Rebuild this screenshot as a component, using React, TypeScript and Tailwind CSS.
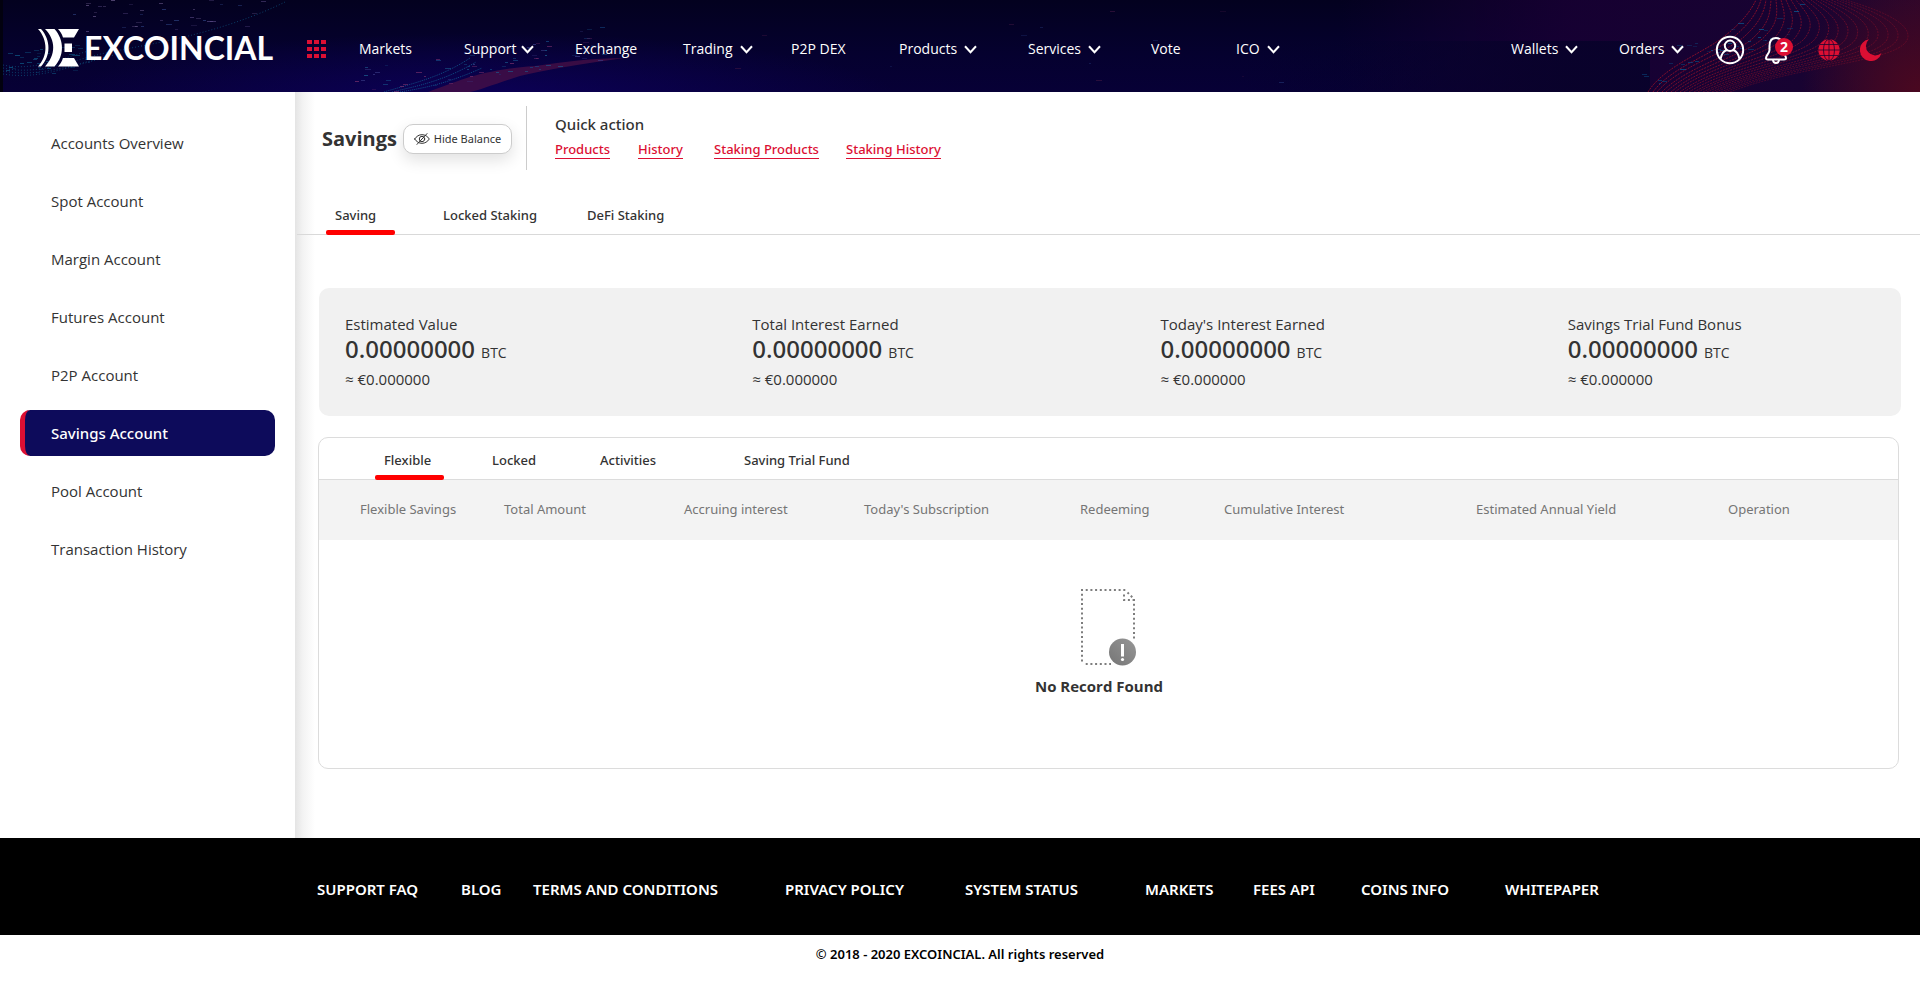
import React, { useState } from "react";

type NavItem = { label: string; menu?: boolean; width: string; gap?: string };

const navItems: NavItem[] = [
  { label: "Markets", width: "w-[105px]" },
  { label: "Support", menu: true, width: "w-[111px]", gap: "gap-1" },
  { label: "Exchange", width: "w-[108px]" },
  { label: "Trading", menu: true, width: "w-[108px]" },
  { label: "P2P DEX", width: "w-[108px]" },
  { label: "Products", menu: true, width: "w-[129px]" },
  { label: "Services", menu: true, width: "w-[123px]" },
  { label: "Vote", width: "w-[85px]" },
  { label: "ICO", menu: true, width: "w-[60px]" },
];

const sideItems = [
  "Accounts Overview",
  "Spot Account",
  "Margin Account",
  "Futures Account",
  "P2P Account",
  "Savings Account",
  "Pool Account",
  "Transaction History",
];

const quickLinks = [
  { label: "Products", width: "w-[83px]" },
  { label: "History", width: "w-[76px]" },
  { label: "Staking Products", width: "w-[132px]" },
  { label: "Staking History", width: "w-[110px]" },
];

const stats = [
  "Estimated Value",
  "Total Interest Earned",
  "Today's Interest Earned",
  "Savings Trial Fund Bonus",
];

const columns = [
  { label: "Flexible Savings", cell: "w-[185px] pl-[41px]" },
  { label: "Total Amount", cell: "w-[180px]" },
  { label: "Accruing interest", cell: "w-[180px]" },
  { label: "Today's Subscription", cell: "w-[216px]" },
  { label: "Redeeming", cell: "w-[144px]" },
  { label: "Cumulative Interest", cell: "w-[252px]" },
  { label: "Estimated Annual Yield", cell: "w-[252px]" },
  { label: "Operation", cell: "w-[171px]" },
];

const footerLinks = [
  "SUPPORT FAQ",
  "BLOG",
  "TERMS AND CONDITIONS",
  "PRIVACY POLICY",
  "SYSTEM STATUS",
  "MARKETS",
  "FEES API",
  "COINS INFO",
  "WHITEPAPER",
];

/* Deterministic pseudo random numbers for the particle field */
function noise(seed: number) {
  const v = Math.sin(seed * 127.1 + 11.7) * 43758.5453;
  return v - Math.floor(v);
}

type Dot = { x: number; y: number; w: number; c: string; o: number };

function scatter(
  count: number,
  seed: number,
  x0: number,
  x1: number,
  y: (t: number) => number,
  spread: number,
  colors: string[],
): Dot[] {
  return Array.from({ length: count }, (_, i) => {
    const t = noise(seed + i * 3);
    return {
      x: Math.round(x0 + t * (x1 - x0)),
      y: Math.round(y(t) + (noise(seed + i * 3 + 1) - 0.5) * spread),
      w: 2 + Math.round(noise(seed + i * 3 + 2) * 4),
      c: colors[i % colors.length],
      o: 0.25 + noise(seed + i * 5 + 4) * 0.5,
    };
  });
}

const dots: Dot[] = [
  ...scatter(45, 3, 70, 270, (t) => 14 - t * 6, 36, ["#5a4a86", "#2c3f7d", "#6b5a8c"]),
  ...scatter(40, 211, 4, 90, (t) => 66 - t * 10, 26, ["#0e5f8c", "#10507c"]),
  ...scatter(90, 500, 350, 620, (t) => 86 - t * 46, 34, ["#1c5f92", "#7a2f6c", "#3d3f8a", "#164a86"]),
  ...scatter(40, 900, 1640, 1800, (t) => 76 - t * 62, 34, ["#0a5f96", "#084f86"]),
  ...scatter(14, 1200, 600, 1500, () => 44, 88, ["#1f2f6c", "#3b1540"]),
];

/* One line of the wave on the right: t runs from the inner to the outer line */
function wave(t: number) {
  const mix = (a: number, b: number) => Math.round(a + (b - a) * t);
  return (
    `M${mix(1648, 1730)} 92` +
    `C${mix(1664, 1800)} ${mix(66, 64)} ${mix(1706, 1908)} ${mix(52, 62)} ${mix(1726, 1908)} ${mix(35, 36)}` +
    `C${mix(1742, 1908)} ${mix(22, 20)} ${mix(1750, 1872)} ${mix(12, 8)} ${mix(1756, 1846)} 0`
  );
}

function HeaderArt() {
  return (
    <svg
      aria-hidden="true"
      className="absolute inset-0 h-full w-full"
      viewBox="0 0 1920 92"
      preserveAspectRatio="xMidYMid slice"
    >
      <defs>
        <linearGradient id="base" x1="0" x2="0" y1="0" y2="1">
          <stop offset="0" stopColor="#03011f" />
          <stop offset="0.6" stopColor="#05012f" />
          <stop offset="1" stopColor="#070036" />
        </linearGradient>
        <radialGradient id="blue" cx="480" cy="100" r="420" gradientUnits="userSpaceOnUse" gradientTransform="matrix(1 0 0 .16 0 84)">
          <stop offset="0" stopColor="#0d0060" stopOpacity="0.8" />
          <stop offset="1" stopColor="#0d0060" stopOpacity="0" />
        </radialGradient>
        <linearGradient id="violet" x1="1340" x2="1920" y1="0" y2="0" gradientUnits="userSpaceOnUse">
          <stop offset="0" stopColor="#190036" stopOpacity="0" />
          <stop offset="0.4" stopColor="#190034" stopOpacity="0.85" />
          <stop offset="0.8" stopColor="#180332" />
          <stop offset="1" stopColor="#2a062c" />
        </linearGradient>
        <radialGradient id="wine" cx="1920" cy="92" r="120" gradientUnits="userSpaceOnUse">
          <stop offset="0" stopColor="#4a0820" />
          <stop offset="1" stopColor="#4a0820" stopOpacity="0" />
        </radialGradient>
        <linearGradient id="night" x1="1240" x2="1560" y1="0" y2="0" gradientUnits="userSpaceOnUse">
          <stop offset="0" stopColor="#04022a" stopOpacity="0" />
          <stop offset="1" stopColor="#060229" stopOpacity="0.8" />
        </linearGradient>
      </defs>
      <rect width="1920" height="92" fill="url(#base)" />
      <rect width="1920" height="92" fill="url(#blue)" />
      <rect x="1340" width="580" height="92" fill="url(#violet)" />
      <rect x="1240" y="41" width="410" height="51" fill="url(#night)" />
      <rect x="1780" width="140" height="92" fill="url(#wine)" />
      <path d="M428 92C462 80 480 70 535 66C565 62 590 58 625 58C580 64 545 70 520 76C495 84 480 90 470 92Z" fill="#4a1046" opacity="0.75" />
      <g fill="none" stroke="#12699c" strokeWidth="1" strokeDasharray="1 1" opacity="0.75">
        <path d="M384 92C410 84 440 78 470 58" />
        <path d="M392 92C416 86 442 82 476 62" />
        <path d="M400 92C424 88 446 84 482 68" />
      </g>
      <g fill="none" stroke="#0d4d78" strokeWidth="1" strokeDasharray="1 2" opacity="0.8">
        <path d="M3 68C40 76 70 60 110 52S220 34 285 2" />
        <path d="M3 71C40 78 74 64 114 55" />
        <path d="M3 74C40 80 70 66 104 58" />
        <path d="M3 65C36 72 66 56 100 48" />
      </g>
      <g fill="none" stroke="#a01228" strokeWidth="1" strokeDasharray="2 1">
        {Array.from({ length: 19 }, (_, i) => (
          <path key={i} d={wave(i / 18)} opacity={0.8 - i * 0.025} />
        ))}
      </g>
      {dots.map((d, i) => (
        <rect key={i} x={d.x} y={d.y} width={d.w} height="1" fill={d.c} opacity={d.o} />
      ))}
      <rect width="3" height="92" fill="#02010f" />
    </svg>
  );
}

function Emblem() {
  return (
    <svg aria-hidden="true" viewBox="0 0 42 38" className="h-[38px] w-[42px] fill-white">
      <path d="M0 0H3C13 11 13 27 3 37.5H0C10 27 10 11 0 0Z" />
      <path d="M7 0H16.500C26.500 11 26.500 27 16.500 37.500H7C18 26 18 11 7 0Z" />
      <path d="M20 0H41L36 8.500H25C24 5 22 2 20 0Z" />
      <path d="M26.500 14.500H34V23H26.500Z" />
      <path d="M25 29H36L41 37.500H20C22 35.500 24 32.500 25 29Z" />
    </svg>
  );
}

function Chevron() {
  return (
    <svg aria-hidden="true" viewBox="0 0 13 9" className="h-[9px] w-[13px] fill-none stroke-white stroke-2">
      <path d="M1 1.200L6.500 7.200L12 1.200" />
    </svg>
  );
}

function GridIcon() {
  return (
    <svg aria-hidden="true" viewBox="0 0 19 18" className="h-[18px] w-[19px] fill-[#dc0f33]">
      {[0, 7, 14].map((x) =>
        [0, 7, 14].map((y) => <rect key={`${x}-${y}`} x={x} y={y} width="5" height="4" />),
      )}
    </svg>
  );
}

function UserIcon() {
  return (
    <svg aria-hidden="true" viewBox="0 0 30 30" className="size-[30px] fill-none stroke-white stroke-2">
      <circle cx="15" cy="15" r="13.200" />
      <circle cx="15" cy="10.800" r="5.200" />
      <path d="M5.500 24.200C6.300 19 9.500 15.800 12 15M24.500 24.200C23.700 19 20.500 15.800 18 15" />
    </svg>
  );
}

function BellIcon() {
  return (
    <svg aria-hidden="true" viewBox="0 0 22 28" className="h-7 w-[22px] fill-none stroke-white stroke-2" strokeLinejoin="round">
      <path d="M11 2C6.500 2 4.500 5.500 4.500 10V14C4.500 17.500 1 19 1 22C1 23 1.700 23.500 3 23.500H19C20.300 23.500 21 23 21 22C21 19 17.500 17.500 17.500 14V10C17.500 5.500 15.500 2 11 2Z" />
      <path d="M8 24C8.200 26 9.300 27 11 27S13.800 26 14 24" />
    </svg>
  );
}

function GlobeIcon() {
  return (
    <svg aria-hidden="true" viewBox="0 0 22 22" className="size-[22px]">
      <circle cx="11" cy="11" r="10.700" fill="#dc0f33" />
      <g fill="none" stroke="#1d0430" strokeWidth="0.800">
        <path d="M11 0V22M0 11H22M2 5.500H20M2 16.500H20" />
        <ellipse cx="11" cy="11" rx="5.500" ry="10.700" />
      </g>
    </svg>
  );
}

function MoonIcon() {
  return (
    <svg aria-hidden="true" viewBox="0 0 22 22" className="size-[22px] fill-[#dc0f33]">
      <path d="M9 0.200A11 11 0 1 0 21.500 14A9.300 9.300 0 0 1 9 0.200Z" />
    </svg>
  );
}

function HideIcon() {
  return (
    <svg aria-hidden="true" viewBox="0 0 16 12" className="h-3 w-4 fill-none stroke-[#333]" strokeLinecap="round">
      <path d="M0.700 6C2.500 3.200 5 1.700 8 1.700S13.500 3.200 15.300 6C13.500 8.800 11 10.300 8 10.300S2.500 8.800 0.700 6Z" />
      <circle cx="8" cy="6" r="2.700" />
      <path d="M13 0.600L3 11.400" />
    </svg>
  );
}

function NoRecordIcon() {
  return (
    <svg aria-hidden="true" viewBox="0 0 56 78" className="h-[78px] w-14">
      <defs>
        <linearGradient id="badge" x1="0" x2="1" y1="1" y2="0">
          <stop offset="0" stopColor="#757575" />
          <stop offset="1" stopColor="#979797" />
        </linearGradient>
      </defs>
      <g fill="none" stroke="#7d7d7d" strokeWidth="2" strokeDasharray="2 2.700">
        <path d="M1 2H46" />
        <path d="M2 5.700V76" />
        <path d="M5.700 76H31" />
        <path d="M54 11V52" />
        <path d="M44 6.500V12H54" />
        <path d="M47.500 4.500L54 11" />
      </g>
      <circle cx="42.500" cy="64" r="13.500" fill="url(#badge)" />
      <path d="M41 56H44V68.500H41Z" fill="#fff" />
      <circle cx="42.500" cy="71.500" r="1.600" fill="#fff" />
    </svg>
  );
}

function NavLink({ item }: { item: NavItem }) {
  return (
    <a href="#" className={`flex items-center whitespace-nowrap ${item.gap ?? "gap-[7px]"}`}>
      {item.label}
      {item.menu && <Chevron />}
    </a>
  );
}

function Header() {
  return (
    <header className="relative bg-[#05012c] text-white">
      <HeaderArt />
      <div className="relative flex h-[92px] items-center pl-[38px] pr-[38px] pt-2">
        <a href="#" className="flex w-[269px] items-center gap-1 pb-1 font-['Lato',sans-serif] text-[32px] font-bold leading-9">
          <Emblem />
          EXCOINCIAL
        </a>
        <button type="button" aria-label="Apps" className="w-[52px] pb-0.5">
          <GridIcon />
        </button>
        <nav aria-label="Main" className="flex flex-1 items-center pb-0.5 text-sm">
          <ul className="flex">
            {navItems.map((item) => (
              <li key={item.label} className={item.width}>
                <NavLink item={item} />
              </li>
            ))}
          </ul>
          <ul className="ml-auto flex">
            <li className="w-[108px]">
              <NavLink item={{ label: "Wallets", menu: true, width: "" }} />
            </li>
            <li className="w-[96px]">
              <NavLink item={{ label: "Orders", menu: true, width: "" }} />
            </li>
          </ul>
        </nav>
        <div className="flex items-center">
          <button type="button" aria-label="Profile" className="mr-5">
            <UserIcon />
          </button>
          <button type="button" aria-label="Notifications" className="relative mr-[31px]">
            <BellIcon />
            <span className="absolute -right-[6px] top-0.5 flex size-[18px] items-center justify-center rounded-full bg-[#dc0f33] text-sm font-bold leading-4">
              2
            </span>
          </button>
          <button type="button" aria-label="Language" className="mr-5">
            <GlobeIcon />
          </button>
          <button type="button" aria-label="Dark mode">
            <MoonIcon />
          </button>
        </div>
      </div>
    </header>
  );
}

function Sidebar() {
  const [active, setActive] = useState("Savings Account");
  return (
    <aside className="w-[295px] shrink-0 px-5 pt-7">
      <nav aria-label="Accounts">
        <ul className="flex flex-col gap-3">
          {sideItems.map((label) => (
            <li key={label}>
              <a
                href="#"
                onClick={() => setActive(label)}
                className={
                  label === active
                    ? "flex h-[46px] items-center rounded-[10px] border-l-[5px] border-[#dc0f33] bg-[#0d0b5b] pl-[26px] font-['Noto_Sans',sans-serif] text-[15px] font-medium text-white"
                    : "flex h-[46px] items-center rounded-[10px] border-l-[5px] border-transparent pl-[26px] text-[15px] text-[#333]"
                }
              >
                {label}
              </a>
            </li>
          ))}
        </ul>
      </nav>
    </aside>
  );
}

function Tab({
  label,
  active,
  width,
  onSelect,
}: {
  label: string;
  active: boolean;
  width: string;
  onSelect: () => void;
}) {
  return (
    <div className={`h-[29px] ${width}`}>
      <button
        type="button"
        role="tab"
        aria-selected={active}
        onClick={onSelect}
        className={
          active
            ? "relative block h-[30px] min-w-[69px] whitespace-nowrap px-[9px] pb-[10px] text-left font-['Noto_Sans',sans-serif] text-[13px] font-medium leading-5 text-[#333] after:absolute after:inset-x-0 after:bottom-0 after:h-[5px] after:rounded-[2px] after:bg-[#f00]"
            : "block h-[30px] min-w-[69px] whitespace-nowrap px-[9px] pb-[10px] text-left font-['Noto_Sans',sans-serif] text-[13px] font-medium leading-5 text-[#333]"
        }
      >
        {label}
      </button>
    </div>
  );
}

function PageHead() {
  return (
    <div className="flex pl-[27px] pt-[14px]">
      <div className="flex h-16 items-center border-r border-[#ccc] pr-[14px] pt-0.5">
        <h1 className="w-[81px] text-xl font-bold leading-7 text-[#333]">Savings</h1>
        <button
          type="button"
          className="flex h-[30px] w-[109px] items-center justify-center gap-1 whitespace-nowrap rounded-[10px] border border-[#ccc] bg-white font-['Noto_Sans',sans-serif] text-[11px] text-[#333] shadow-[0_6px_16px_rgba(0,0,0,0.12)]"
        >
          <HideIcon />
          Hide Balance
        </button>
      </div>
      <section className="pl-7 pt-2">
        <h2 className="font-['Noto_Sans',sans-serif] text-[15px] font-medium leading-5 text-[#333]">Quick action</h2>
        <ul className="mt-[6px] flex">
          {quickLinks.map((link) => (
            <li key={link.label} className={link.width}>
              <a
                href="#"
                className="block w-fit whitespace-nowrap border-b border-[#dc0f33] font-['Noto_Sans',sans-serif] text-[13px] font-medium leading-[18px] text-[#dc0f33]"
              >
                {link.label}
              </a>
            </li>
          ))}
        </ul>
      </section>
    </div>
  );
}

function Stats() {
  return (
    <section className="grid grid-cols-[407fr_408fr_407fr_333fr] rounded-[10px] bg-[#f1f1f1] pb-[27px] pl-[26px] pt-[26px] text-[15px] leading-5 text-[#333]">
      {stats.map((label) => (
        <div key={label} className="whitespace-nowrap">
          <h3>{label}</h3>
          <p className="flex items-baseline gap-[6px]">
            <span className="font-['Noto_Sans',sans-serif] text-2xl font-medium leading-[30px]">0.00000000</span>
            <span className="text-sm leading-5">BTC</span>
          </p>
          <p className="mt-[5px]">≈ €0.000000</p>
        </div>
      ))}
    </section>
  );
}

function Records() {
  const [tab, setTab] = useState("Flexible");
  const tabs = [
    { label: "Flexible", width: "w-[108px]" },
    { label: "Locked", width: "w-[108px]" },
    { label: "Activities", width: "w-[144px]" },
    { label: "Saving Trial Fund", width: "w-[144px]" },
  ];
  return (
    <section className="-ml-px mr-0.5 mt-[21px] overflow-hidden rounded-[10px] border border-[#dcdcdc] bg-white">
      <div role="tablist" className="flex border-b border-[#dcdcdc] pl-[56px] pt-3">
        {tabs.map((t) => (
          <Tab key={t.label} {...t} active={tab === t.label} onSelect={() => setTab(t.label)} />
        ))}
      </div>
      <table className="w-full table-fixed border-collapse text-[13px] text-[#757575]">
        <thead className="bg-[#f3f3f3] font-['Noto_Sans',sans-serif]">
          <tr>
            {columns.map((c) => (
              <th key={c.label} scope="col" className={`h-[60px] whitespace-nowrap text-left font-normal ${c.cell}`}>
                {c.label}
              </th>
            ))}
          </tr>
        </thead>
        <tbody>
          <tr>
            <td colSpan={8} className="pb-[71px] pt-12">
              <div className="flex flex-col items-center pr-0.5">
                <NoRecordIcon />
                <p className="mt-[9px] pr-[18px] text-[15px] font-bold leading-[22px] text-[#333]">No Record Found</p>
              </div>
            </td>
          </tr>
        </tbody>
      </table>
    </section>
  );
}

function Main() {
  const [tab, setTab] = useState("Saving");
  const tabs = [
    { label: "Saving", width: "w-[108px]" },
    { label: "Locked Staking", width: "w-[144px]" },
    { label: "DeFi Staking", width: "w-[144px]" },
  ];
  return (
    <main className="min-w-0 flex-1 bg-[linear-gradient(to_right,#e4e4e4,#f3f3f3_8px,#fff_20px)] bg-no-repeat pb-[69px]">
      <PageHead />
      <div role="tablist" className="ml-[2px] mt-[35px] flex border-b border-[#d9d9d9] pl-[29px]">
        {tabs.map((t) => (
          <Tab key={t.label} {...t} active={tab === t.label} onSelect={() => setTab(t.label)} />
        ))}
      </div>
      <div className="ml-6 mr-[19px] mt-[53px]">
        <Stats />
        <Records />
      </div>
    </main>
  );
}

function Footer() {
  return (
    <footer className="font-['Noto_Sans',sans-serif]">
      <nav aria-label="Footer" className="bg-black pl-[317px] pr-[163px] pt-[41px] pb-[36px]">
        <ul className="grid grid-cols-[144fr_72fr_252fr_180fr_180fr_108fr_108fr_144fr_252fr] text-[15px] font-semibold leading-5 text-white">
          {footerLinks.map((label) => (
            <li key={label} className="whitespace-nowrap">
              <a href="#">{label}</a>
            </li>
          ))}
        </ul>
      </nav>
      <p className="pb-[21px] pt-[9px] text-center text-[13px] font-semibold leading-5 text-black">
        © 2018 - 2020 EXCOINCIAL. All rights reserved
      </p>
    </footer>
  );
}

export default function App() {
  return (
    <div className="flex min-h-screen flex-col bg-white font-['Open_Sans',sans-serif]">
      <Header />
      <div className="flex flex-1">
        <Sidebar />
        <Main />
      </div>
      <Footer />
    </div>
  );
}
